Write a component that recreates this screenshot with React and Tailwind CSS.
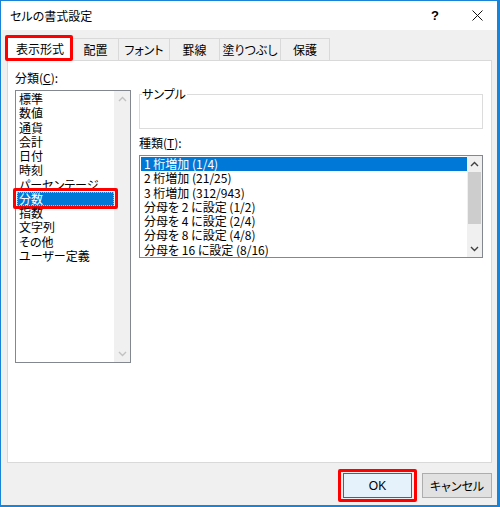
import { useState } from "react";

const tabs = ["表示形式", "配置", "フォント", "罫線", "塗りつぶし", "保護"];
const tabWidths = ["w-[66px]", "w-[47px]", "w-[52px]", "w-[51px]", "w-[62px]", "w-[50px]"];

const categories = [
    "標準", "数値", "通貨", "会計", "日付", "時刻", "パーセンテージ",
    "分数", "指数", "文字列", "その他", "ユーザー定義",
];

const types = [
    "1 桁増加 (1/4)",
    "2 桁増加 (21/25)",
    "3 桁増加 (312/943)",
    "分母を 2 に設定 (1/2)",
    "分母を 4 に設定 (2/4)",
    "分母を 8 に設定 (4/8)",
    "分母を 16 に設定 (8/16)",
];

const Chevron = ({ up, color }) => (
    <svg width="9" height="6" viewBox="0 0 9 6">
        <polyline
            points={up ? "1,5 4.5,1.5 8,5" : "1,1 4.5,4.5 8,1"}
            fill="none"
            stroke={color}
            strokeWidth="1.4"
        />
    </svg>
);

const App = () => {
    const [tab, setTab] = useState(0);
    const [category, setCategory] = useState(7);
    const [type, setType] = useState(0);

    return (
        <div className="w-[500px] h-[507px] bg-[#f0f0f0] border-[#1883d7] border-l border-t border-r-[3px] border-b-2 flex flex-col text-[12px] text-black font-['Yu_Gothic_UI','Meiryo_UI','Noto_Sans_CJK_JP',sans-serif] [font-feature-settings:'palt']">
            {/* title bar */}
            <div className="h-[29px] bg-white flex items-center shrink-0">
                <span className="pl-[9px] flex-1">セルの書式設定</span>
                <span className="w-[46px] text-center font-bold text-[13px] font-['Liberation_Sans',sans-serif]">?</span>
                <span className="w-[39px] flex justify-center">
                    <svg width="11" height="11" viewBox="0 0 11 11">
                        <path d="M0.5 0.5 L10.5 10.5 M10.5 0.5 L0.5 10.5" stroke="#111" strokeWidth="1" />
                    </svg>
                </span>
            </div>

            <div className="flex-1 flex flex-col pl-[6px] pr-[5px]">
                {/* tabs */}
                <div className="flex items-end h-[30px] pt-[8px]">
                    {tabs.map((t, i) => (
                        <div
                            key={t}
                            onClick={() => setTab(i)}
                            className={`${tabWidths[i]} relative flex items-center justify-center whitespace-nowrap cursor-default border border-[#d9d9d9] ${
                                i === tab
                                    ? "h-[25px] -mb-px bg-white border-b-white z-10"
                                    : "h-[22px] bg-[#f0f0f0] border-b-0 -ml-px first:ml-0"
                            }`}
                        >
                            {t}
                            {i === 0 && (
                                <span className="absolute -left-[3px] -right-[1px] -top-[2px] -bottom-[1px] border-[3px] border-[#ff0000] rounded-[2px] pointer-events-none" />
                            )}
                        </div>
                    ))}
                </div>

                {/* panel */}
                <div className="w-[485px] h-[403px] bg-white border border-[#d9d9d9] flex pl-[7px]">
                    {/* category column */}
                    <div className="flex flex-col pt-[10px]">
                        <div className="h-[14px] leading-[14px]">
                            分類(<span className="underline">C</span>):
                        </div>
                        <div className="mt-[5px] w-[116px] h-[273px] border border-[#828790] flex">
                            <div className="flex-1 pt-[1px] pl-px">
                                {categories.map((c, i) => (
                                    <div
                                        key={c}
                                        onClick={() => setCategory(i)}
                                        className={`relative h-[14.25px] leading-[14px] pl-[2px] whitespace-nowrap ${
                                            i === category
                                                ? "bg-[#0078d7] text-white outline outline-1 outline-dotted outline-[#e8b95a] -outline-offset-1"
                                                : ""
                                        }`}
                                    >
                                        {c}
                                        {i === 7 && (
                                            <span className="absolute -left-[4px] -right-[4px] -top-[4px] -bottom-[3px] border-[3px] border-[#ff0000] rounded-[2px] pointer-events-none" />
                                        )}
                                    </div>
                                ))}
                            </div>
                            <div className="w-[16px] bg-[#f0f0f0] flex flex-col items-center justify-between py-[5px]">
                                <Chevron up color="#c2c2c2" />
                                <Chevron color="#c2c2c2" />
                            </div>
                        </div>
                    </div>

                    {/* right column */}
                    <div className="ml-[8px] flex flex-col pt-[33px] w-[344px]">
                        <div className="relative h-[35px] border border-[#dcdcdc]">
                            <span className="absolute -top-[8px] left-[2px] bg-white pr-[1px] leading-[14px]">サンプル</span>
                        </div>
                        <div className="mt-[7px] h-[14px] leading-[14px]">
                            種類(<span className="underline">T</span>):
                        </div>
                        <div className="mt-[5px] h-[103px] border border-[#828790] flex">
                            <div className="flex-1 pt-[1px] pl-px">
                                {types.map((t, i) => (
                                    <div
                                        key={t}
                                        onClick={() => setType(i)}
                                        className={`h-[14.3px] leading-[14px] pl-[3px] whitespace-nowrap ${
                                            i === type ? "bg-[#0078d7] text-white h-[13px]" : ""
                                        }`}
                                    >
                                        {t}
                                    </div>
                                ))}
                            </div>
                            <div className="w-[15px] bg-[#f0f0f0] flex flex-col items-center">
                                <div className="h-[16px] flex items-center">
                                    <Chevron up color="#404040" />
                                </div>
                                <div className="w-[13px] h-[52px] bg-[#cdcdcd]" />
                                <div className="flex-1" />
                                <div className="h-[16px] flex items-center">
                                    <Chevron color="#404040" />
                                </div>
                            </div>
                        </div>
                    </div>
                </div>

                {/* buttons */}
                <div className="flex justify-end gap-[10px] pt-[10px]">
                    <div className="relative">
                        <button className="w-[69px] h-[25px] bg-[#e5f1fb] border border-[#0078d7] font-['Liberation_Sans',sans-serif] text-[12px]">
                            OK
                        </button>
                        <span className="absolute -left-[5px] -right-[5px] -top-[4px] -bottom-[4px] border-[3px] border-[#ff0000] rounded-[2px] pointer-events-none" />
                    </div>
                    <button className="w-[70px] h-[25px] bg-[#e1e1e1] border border-[#adadad]">
                        キャンセル
                    </button>
                </div>
            </div>
        </div>
    );
};

export default App;
